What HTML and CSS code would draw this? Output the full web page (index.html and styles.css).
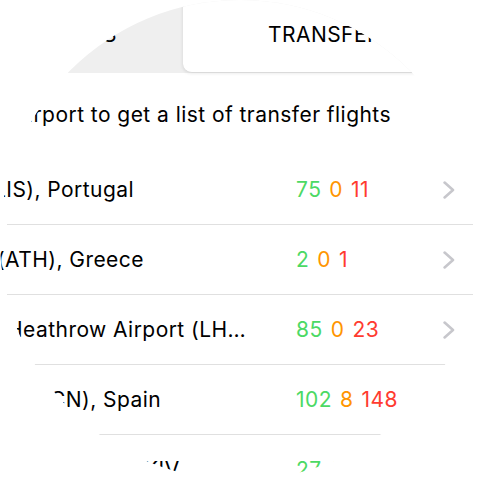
FILE: index.html
```html
<!DOCTYPE html>
<html lang="en">
<head>
<meta charset="utf-8">
<title>Transfers</title>
<link rel="stylesheet" href="styles.css">
</head>
<body>
<div class="screen">
  <div class="segbar">
    <div class="seg seg-off"><span>AIRPORTS</span></div>
    <div class="seg seg-on"><span>TRANSFERS</span></div>
  </div>
  <div class="hint"><span>Select an airport to get a list of transfer flights</span></div>
  <ul class="list">
    <li class="row">
      <span class="name n-lis">LIS), Portugal</span>
      <span class="counts"><b class="ok">75</b><b class="warn">0</b><b class="bad">11</b></span>
      <svg class="chev" viewBox="0 0 12 18" width="12" height="18"><polyline points="1.6,1.6 10,9 1.6,16.4"/></svg>
    </li>
    <li class="row">
      <span class="name n-ath">(ATH), Greece</span>
      <span class="counts"><b class="ok">2</b><b class="warn">0</b><b class="bad">1</b></span>
      <svg class="chev" viewBox="0 0 12 18" width="12" height="18"><polyline points="1.6,1.6 10,9 1.6,16.4"/></svg>
    </li>
    <li class="row">
      <span class="name n-lhr">Heathrow Airport (LHR), United Kingdom</span>
      <span class="counts"><b class="ok">85</b><b class="warn">0</b><b class="bad">23</b></span>
      <svg class="chev" viewBox="0 0 12 18" width="12" height="18"><polyline points="1.6,1.6 10,9 1.6,16.4"/></svg>
    </li>
    <li class="row">
      <span class="name n-bcn">CN), Spain</span>
      <span class="counts"><b class="ok">102</b><b class="warn">8</b><b class="bad">148</b></span>
      <svg class="chev" viewBox="0 0 12 18" width="12" height="18"><polyline points="1.6,1.6 10,9 1.6,16.4"/></svg>
    </li>
    <li class="row">
      <span class="name n-kiv">KIV</span>
      <span class="counts"><b class="ok">27</b><b class="warn">0</b><b class="bad">5</b></span>
      <svg class="chev" viewBox="0 0 12 18" width="12" height="18"><polyline points="1.6,1.6 10,9 1.6,16.4"/></svg>
    </li>
  </ul>
</div>
</body>
</html>
```

FILE: styles.css
```css
* { box-sizing: border-box; }
html, body { margin: 0; padding: 0; background: #fff; }
body {
  font-family: Inter, "Liberation Sans", sans-serif;
  font-size: 21px;
  letter-spacing: 0.45px;
  color: #000;
}
.screen {
  width: 480px;
  height: 480px;
  overflow: hidden;
  background: #fff;
  clip-path: circle(240px at 240px 240px);
}
.segbar {
  display: flex;
  height: 73px;
  background: #efefef;
}
.seg {
  display: flex;
  padding-top: 22px;
  white-space: nowrap;
}
.seg-off {
  width: 183px;
  flex: none;
  justify-content: flex-end;
  padding-right: 66px;
}
.seg-on {
  flex: 1;
  background: #fff;
  border-bottom: 1px solid #dadada;
  border-bottom-left-radius: 9px;
  box-shadow: -1px 1px 3px rgba(0, 0, 0, 0.07);
  padding-left: 85px;
}
.hint {
  display: flex;
  justify-content: flex-end;
  align-items: center;
  height: 82px;
  padding-right: 89px;
  white-space: nowrap;
}
.list {
  list-style: none;
  margin: 0;
  padding: 0;
}
.row {
  display: flex;
  align-items: center;
  height: 70px;
  margin: 0 7px;
  border-bottom: 1px solid #e0e0e0;
}
.name {
  flex: none;
  white-space: nowrap;
}
.n-lis { margin-left: -13px; width: 302px; }
.n-ath { margin-left: -10px; width: 299px; }
.n-lhr {
  margin-left: 0;
  width: 246px;
  margin-right: 43px;
  overflow: hidden;
  text-overflow: ellipsis;
}
.n-bcn { margin-left: 43px; width: 246px; }
.n-kiv { margin-left: 137px; width: 152px; }
.counts {
  display: flex;
  gap: 8px;
}
.counts b { font-weight: 400; }
.ok { color: #4cd964; }
.warn { color: #ff9500; }
.bad { color: #ff3b30; }
.chev {
  margin-left: auto;
  margin-right: 18px;
  flex: none;
}
.chev polyline {
  fill: none;
  stroke: #c7c7cc;
  stroke-width: 2.6;
  stroke-linecap: round;
  stroke-linejoin: round;
}
```
